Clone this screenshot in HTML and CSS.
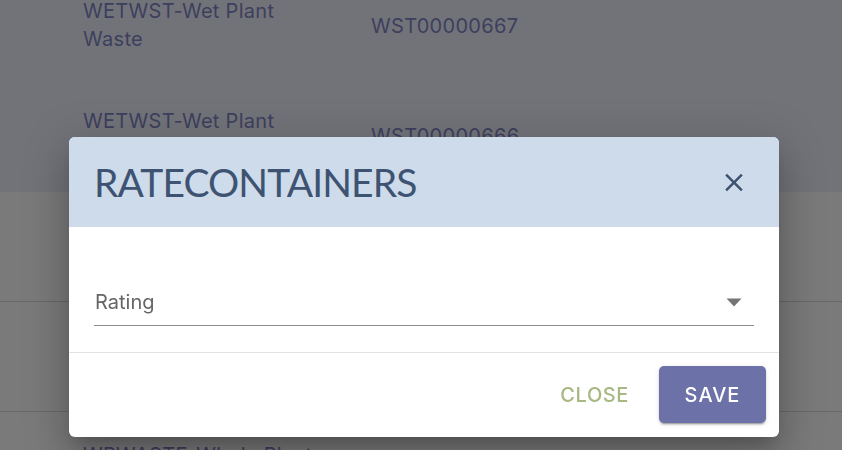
FILE: index.html
```html
<!DOCTYPE html>
<html>
<head>
<meta charset="utf-8">
<link rel="stylesheet" href="styles.css">
</head>
<body>
<div class="page">
  <section class="top">
    <div class="row">
      <div class="cell name">WETWST-Wet Plant<br>Waste</div>
      <div class="cell code">WST00000667</div>
    </div>
    <div class="row">
      <div class="cell name">WETWST-Wet Plant<br>Waste</div>
      <div class="cell code">WST00000666</div>
    </div>
  </section>
  <section class="bottom">
    <div class="row lined">
      <div class="cell name">WETWST-Wet Plant<br>Waste</div>
      <div class="cell code">WST00000665</div>
    </div>
    <div class="row lined">
      <div class="cell name">WETWST-Wet Plant<br>Waste</div>
      <div class="cell code">WST00000664</div>
    </div>
    <div class="row lined">
      <div class="cell name">WPWASTE-Whole Plant<br>Waste</div>
      <div class="cell code">WST00000663</div>
    </div>
  </section>
</div>

<div class="dialog">
  <header class="dialog-head">
    <h1 class="dialog-title">RATECONTAINERS</h1>
    <button class="icon-btn" aria-label="close">
      <svg width="24" height="24" viewBox="0 0 24 24"><path d="M19 6.41 17.59 5 12 10.59 6.41 5 5 6.41 10.59 12 5 17.59 6.41 19 12 13.41 17.59 19 19 17.59 13.41 12z" fill="#3e5371"/></svg>
    </button>
  </header>
  <div class="dialog-body">
    <div class="select">
      <span class="select-label">Rating</span>
      <svg class="caret" width="16" height="9" viewBox="0 0 16 9"><path d="M0.5 0.5h15L8 8.5z" fill="#757575"/></svg>
    </div>
  </div>
  <footer class="dialog-foot">
    <button class="btn-text">CLOSE</button>
    <button class="btn-primary">SAVE</button>
  </footer>
</div>
</body>
</html>
```

FILE: styles.css
```css
html, body {
  margin: 0;
  padding: 0;
  height: 100%;
  overflow: hidden;
  font-family: "Inter", "Noto Sans", sans-serif;
}

.page {
  width: 842px;
  height: 450px;
  display: flex;
  flex-direction: column;
}

.top {
  height: 192px;
  background: #727379;
  overflow: hidden;
  flex: none;
}

.bottom {
  flex: 1;
  background: #7a7a7a;
  overflow: hidden;
}

.row {
  height: 110px;
  display: flex;
  align-items: center;
  box-sizing: border-box;
  flex: none;
}

.top .row:first-child {
  margin-top: -30px;
}

.row.lined {
  border-bottom: 1px solid #686868;
}

.bottom .row:last-child {
  padding-top: 4px;
}

.cell {
  font-size: 20px;
  line-height: 28px;
  color: #3d3f5e;
  letter-spacing: 0.3px;
}

.name {
  width: 288px;
  padding-left: 83px;
}

.code {
  width: 200px;
  padding-top: 2px;
}

.dialog {
  position: fixed;
  left: 69px;
  top: 137px;
  width: 710px;
  height: 300px;
  background: #fff;
  border-radius: 6px;
  overflow: hidden;
  display: flex;
  flex-direction: column;
  box-shadow: 0 11px 15px -7px rgba(0,0,0,.2), 0 24px 38px 3px rgba(0,0,0,.14), 0 9px 46px 8px rgba(0,0,0,.12);
}

.dialog-head {
  height: 90px;
  flex: none;
  background: #cddbeb;
  display: flex;
  align-items: center;
  justify-content: space-between;
  padding: 0 30px 0 25px;
}

.dialog-title {
  margin: 0;
  font-family: "Lato", sans-serif;
  font-weight: 400;
  font-size: 39px;
  color: #3e5371;
  letter-spacing: -0.9px;
}

.icon-btn {
  border: 0;
  background: none;
  padding: 0;
  width: 30px;
  height: 30px;
  display: flex;
  align-items: center;
  justify-content: center;
}

.icon-btn svg {
  width: 31px;
  height: 31px;
}

.dialog-body {
  height: 125px;
  flex: none;
  border-bottom: 1px solid #e2e2e2;
  padding: 0 25px;
  display: flex;
  align-items: flex-end;
}

.select {
  width: 660px;
  height: 50px;
  margin-bottom: 26px;
  border-bottom: 1px solid #8c8c8c;
  display: flex;
  align-items: center;
  justify-content: space-between;
  box-sizing: border-box;
  padding-top: 3px;
}

.select-label {
  font-size: 20px;
  color: #666;
  padding-left: 1px;
}

.caret {
  margin-right: 12px;
}

.dialog-foot {
  flex: 1;
  display: flex;
  align-items: flex-start;
  justify-content: flex-end;
  gap: 16px;
  padding: 13px 13px 0 0;
}

.btn-text {
  border: 0;
  background: none;
  font-family: "Inter", sans-serif;
  font-size: 20px;
  font-weight: 500;
  color: #a8b882;
  letter-spacing: 0.6px;
  height: 57px;
  padding: 0 14px;
}

.btn-primary {
  border: 0;
  background: #6c72a8;
  color: #fff;
  font-family: "Inter", sans-serif;
  font-size: 20px;
  font-weight: 500;
  letter-spacing: 1px;
  width: 107px;
  height: 57px;
  border-radius: 5px;
  box-shadow: 0 3px 1px -2px rgba(0,0,0,.2), 0 2px 2px 0 rgba(0,0,0,.14), 0 1px 5px 0 rgba(0,0,0,.12);
}
```
